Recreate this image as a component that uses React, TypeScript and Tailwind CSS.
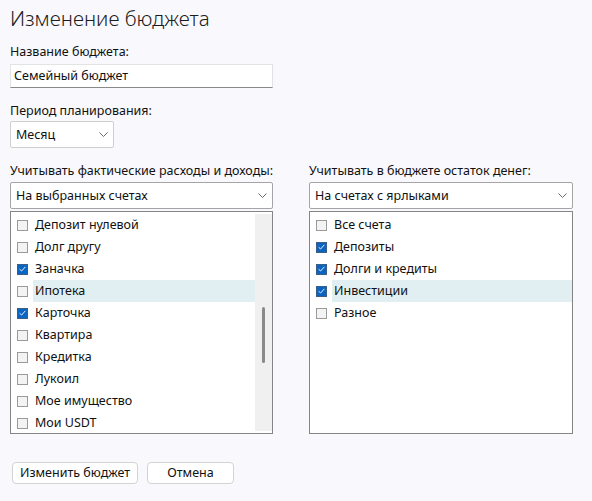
import React from "react";

type Item = { label: string; checked: boolean; hover?: boolean };

const actual: Item[] = [
  { label: "Депозит нулевой", checked: false },
  { label: "Долг другу", checked: false },
  { label: "Заначка", checked: true },
  { label: "Ипотека", checked: false, hover: true },
  { label: "Карточка", checked: true },
  { label: "Квартира", checked: false },
  { label: "Кредитка", checked: false },
  { label: "Лукоил", checked: false },
  { label: "Мое имущество", checked: false },
  { label: "Мои USDT", checked: false },
];

const remainder: Item[] = [
  { label: "Все счета", checked: false },
  { label: "Депозиты", checked: true },
  { label: "Долги и кредиты", checked: true },
  { label: "Инвестиции", checked: true, hover: true },
  { label: "Разное", checked: false },
];

function Chevron() {
  return (
    <svg width="9" height="5" viewBox="0 0 9 5" className="shrink-0">
      <path d="M0.5 0.5 L4.5 4.5 L8.5 0.5" fill="none" stroke="#6b6b6b" strokeWidth="1" />
    </svg>
  );
}

function Check({ checked }: { checked: boolean }) {
  if (!checked) {
    return <span className="h-[11px] w-[11px] shrink-0 border border-[#9a9a9a] bg-[#f3f3f3]" />;
  }
  return (
    <span className="flex h-[11px] w-[11px] shrink-0 items-center justify-center border border-[#3b5f86] bg-[#0a64c2]">
      <svg width="7" height="6" viewBox="0 0 7 6">
        <path d="M0.6 3.2 L2.6 5 L6.4 0.8" fill="none" stroke="#ffffff" strokeWidth="0.9" />
      </svg>
    </span>
  );
}

function Select({ value, className }: { value: string; className: string }) {
  return (
    <div className={`flex h-[27px] items-center justify-between rounded-[2px] border bg-white pl-[5px] pr-[5px] ${className}`}>
      <span>{value}</span>
      <Chevron />
    </div>
  );
}

function Row({ item }: { item: Item }) {
  return (
    <div className="flex h-[22px] items-center pl-[6px]">
      <Check checked={item.checked} />
      <span
        className={`ml-[5px] flex h-[22px] flex-1 items-center px-[2px] ${item.hover ? "bg-[#e1eff3]" : ""}`}
      >
        {item.label}
      </span>
    </div>
  );
}

export default function App() {
  return (
    <div
      className="flex h-[501px] w-[592px] flex-col whitespace-nowrap bg-[#f9f9fd] px-[10px] text-[12.5px] leading-[18px] text-[#111111]"
      style={{ fontFamily: '"Noto Sans", "Open Sans", sans-serif' }}
    >
      <h1 className="mt-[4px] text-[20.5px] font-light leading-[28px] text-[#1c1c1c]">Изменение бюджета</h1>

      <div className="mt-[11px]">Название бюджета:</div>
      <div className="mt-[3px] flex h-[24px] w-[263px] items-center border border-[#e3e3e3] border-b-[#8a8a8a] bg-white px-[3px]">
        Семейный бюджет
      </div>

      <div className="mt-[14px]">Период планирования:</div>
      <Select value="Месяц" className="mt-[1px] w-[104px] border-[#cfcfcf]" />

      <div className="mt-[14px] flex gap-[36px]">
        <div className="flex w-[263px] flex-col">
          <div>Учитывать фактические расходы и доходы:</div>
          <Select value="На выбранных счетах" className="mt-[2px] border-[#a5a5a5]" />
          <div className="mt-[2px] flex h-[223px] border border-[#858585] bg-white">
            <div className="flex-1 pt-[2px]">
              {actual.map((it) => (
                <Row key={it.label} item={it} />
              ))}
            </div>
            <div className="my-[2px] flex w-[17px] justify-center bg-[#f0f0f0] pt-[93px]">
              <div className="h-[56px] w-[3px] rounded-full bg-[#8a8a8a]" />
            </div>
          </div>
        </div>

        <div className="flex w-[264px] flex-col">
          <div>Учитывать в бюджете остаток денег:</div>
          <Select value="На счетах с ярлыками" className="mt-[2px] border-[#a5a5a5]" />
          <div className="mt-[2px] h-[223px] border border-[#858585] bg-white pt-[2px]">
            {remainder.map((it) => (
              <Row key={it.label} item={it} />
            ))}
          </div>
        </div>
      </div>

      <div className="mt-[28px] flex gap-[9px] pl-[2px]">
        <button className="h-[22px] w-[126px] rounded-[4px] border border-[#d3d3d3] bg-white leading-[18px]">
          Изменить бюджет
        </button>
        <button className="h-[22px] w-[87px] rounded-[4px] border border-[#d3d3d3] bg-white leading-[18px]">
          Отмена
        </button>
      </div>
    </div>
  );
}
